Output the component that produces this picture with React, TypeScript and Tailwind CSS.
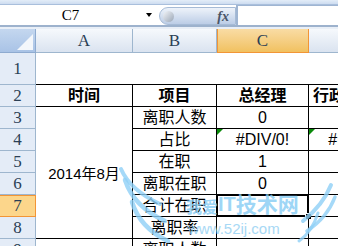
import React from "react"

const serif = "font-['Liberation_Serif','Times_New_Roman',serif]"
const cjk = "font-['Liberation_Sans','Noto_Sans_CJK_SC',sans-serif]"

function ColHead({ label, active }: { label: string; active?: boolean }) {
  return (
    <div
      className={
        active
          ? `flex items-center justify-center border-r border-b border-[#f29536] bg-gradient-to-b from-[#f9dca4] to-[#f1c15f] shadow-[inset_1px_0_0_#f29536] text-[17px] text-[#2b3f55] ${serif}`
          : `flex items-center justify-center border-r border-b border-[#9eb6ce] bg-gradient-to-b from-[#f6f9fc] to-[#dae3f0] text-[17px] text-[#2b3f55] ${serif}`
      }
    >
      {label}
    </div>
  )
}

function RowHead({ n, active }: { n: number; active?: boolean }) {
  return (
    <div
      className={
        active
          ? `flex items-center justify-center border-r border-b border-[#f29536] bg-[#fcd68b] shadow-[inset_0_1px_0_#f29536] text-[17px] text-[#2b3f55] ${serif}`
          : `flex items-center justify-center border-r border-b border-[#9eb6ce] bg-[#e4ecf7] text-[17px] text-[#2b3f55] ${serif}`
      }
    >
      {n}
    </div>
  )
}

function Cell({
  children,
  right = true,
  bold,
  className = "",
}: {
  children?: React.ReactNode
  right?: boolean
  bold?: boolean
  className?: string
}) {
  return (
    <div
      className={`relative flex items-center justify-center overflow-hidden whitespace-nowrap border-b border-black ${
        right ? "border-r" : ""
      } ${bold ? "font-bold" : ""} text-[16px] text-black ${cjk} ${className}`}
    >
      {children}
    </div>
  )
}

function ErrMark() {
  return (
    <span className="absolute left-0 top-0 h-0 w-0 border-t-[6px] border-r-[6px] border-t-[#0a8a0a] border-r-transparent" />
  )
}

export default function App() {
  return (
    <div className="relative h-[246px] w-[338px] overflow-hidden bg-white">
      {/* ribbon edge */}
      <div className="h-[5px] border-b border-[#a9bfdc] bg-gradient-to-b from-[#e3edf8] to-[#cddcf0]" />

      {/* formula bar */}
      <div className="flex h-[20px] bg-white">
        <div className="flex w-[159px] items-center">
          <div className={`flex w-[141px] justify-center text-[15px] text-black ${serif}`}>C7</div>
          <span className="ml-[5px] h-0 w-0 border-x-[3px] border-t-[4px] border-x-transparent border-t-black" />
        </div>
        <div className="mt-[2px] flex h-[18px] w-[77px] items-center justify-between rounded-l-full border border-[#a6bbd6] bg-gradient-to-b from-[#eef3fa] to-[#bccde6] pl-[3px] pr-[6px]">
          <span className="h-[11px] w-[11px] rounded-full bg-gradient-to-br from-[#f4f6f9] to-[#9aa6b6]" />
          <span className={`text-[14px] font-bold italic text-[#4a5568] ${serif}`}>fx</span>
        </div>
        <div className="flex-1 border-l-2 border-t border-[#9fb5d2] bg-white" />
      </div>
      <div className="h-[2px] bg-[#9db2cd]" />
      <div className="h-[2px] bg-[#e9eff7]" />

      {/* sheet */}
      <div className="grid grid-cols-[36px_97px_84px_92px_92px] grid-rows-[24px_32px_22px_22px_22px_22px_22px_22px_22px_22px]">
        <div className="relative border-r border-b border-[#8eabd0] bg-gradient-to-b from-[#c4d7ef] to-[#a9c3e6]">
          <svg className="absolute inset-0" width="36" height="24">
            <polygon points="33,5 33,21 17,21" fill="#f4f7fb" />
          </svg>
        </div>
        <ColHead label="A" />
        <ColHead label="B" />
        <ColHead label="C" active />
        <ColHead label="D" />

        {/* row 1 */}
        <RowHead n={1} />
        <Cell right={false} />
        <Cell right={false} />
        <Cell right={false} />
        <Cell right={false} />

        {/* row 2 */}
        <RowHead n={2} />
        <Cell bold>时间</Cell>
        <Cell bold>项目</Cell>
        <Cell bold>总经理</Cell>
        <Cell bold className="justify-start pl-[4px]">行政人事部</Cell>

        {/* row 3 */}
        <RowHead n={3} />
        <Cell className="row-span-6">
          <span className="mt-[3px] text-[15px]">2014年8月</span>
        </Cell>
        <Cell>离职人数</Cell>
        <Cell>0</Cell>
        <Cell right={false} />

        {/* row 4 */}
        <RowHead n={4} />
        <Cell>占比</Cell>
        <Cell>
          <ErrMark />
          #DIV/0!
        </Cell>
        <Cell right={false}>
          <ErrMark />
          #DIV/0!
        </Cell>

        {/* row 5 */}
        <RowHead n={5} />
        <Cell>在职</Cell>
        <Cell>1</Cell>
        <Cell right={false} />

        {/* row 6 */}
        <RowHead n={6} />
        <Cell>离职在职</Cell>
        <Cell>0</Cell>
        <Cell right={false} />

        {/* row 7 */}
        <RowHead n={7} active />
        <Cell>合计在职</Cell>
        <div className="relative border-r border-b border-black">
          <div className="absolute -inset-[1px] border-2 border-black" />
          <span className="absolute -bottom-[4px] -right-[4px] h-[7px] w-[7px] border border-white bg-black" />
        </div>
        <Cell right={false} />

        {/* row 8 */}
        <RowHead n={8} />
        <Cell>离职率</Cell>
        <Cell />
        <Cell right={false} />

        {/* row 9 */}
        <RowHead n={9} />
        <Cell />
        <Cell>离职人数</Cell>
        <Cell />
        <Cell right={false} />
      </div>

      {/* watermark */}
      <div className="pointer-events-none absolute inset-0">
        <svg className="absolute inset-0" width="338" height="246" fill="none" strokeLinecap="round">
          <g stroke="#8fd0f6" strokeOpacity="0.8">
            <path d="M121 169 Q130 190 160 204" strokeWidth="4" />
            <path d="M125 180 Q134 207 165 221" strokeWidth="4.5" />
            <path d="M132 202 Q140 228 168 241" strokeWidth="4.5" />
            <path d="M331 185 Q323 205 303 221" strokeWidth="4" />
            <path d="M335 197 Q327 218 307 231" strokeWidth="3.5" />
            <path d="M318 213 Q312 232 299 241" strokeWidth="3" />
          </g>
        </svg>
        <div className="absolute left-[186px] top-[193px] flex items-end whitespace-nowrap leading-none text-[#86cdf5] opacity-80">
          <span className="text-[16px] font-bold font-['Noto_Sans_CJK_SC',sans-serif]">我爱</span>
          <span className="text-[20px] font-bold font-['Liberation_Sans',sans-serif]">IT</span>
          <span className="text-[21px] font-bold font-['Noto_Sans_CJK_SC',sans-serif]">技术网</span>
        </div>
        <div className="absolute left-[188px] top-[221px] text-[15px] leading-none text-[#92d0f3] opacity-80 font-['Liberation_Sans',sans-serif]">
          www.52ij.com
        </div>
      </div>
    </div>
  )
}
